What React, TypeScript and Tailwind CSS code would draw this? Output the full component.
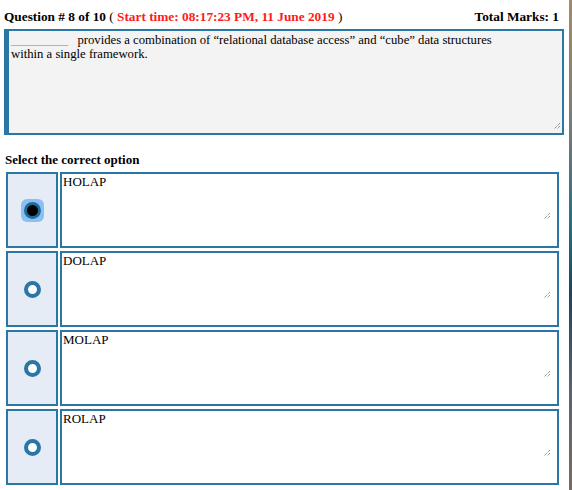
import React from 'react'

const options = ['HOLAP', 'DOLAP', 'MOLAP', 'ROLAP']

function Grip({ className }: { className: string }) {
  return (
    <svg className={className} width="8" height="8" viewBox="0 0 8 8">
      <path d="M7 1 L1 7 M7 4 L4 7" stroke="#6b6b6b" strokeWidth="1" strokeDasharray="1 1" />
    </svg>
  )
}

function Radio({ checked }: { checked: boolean }) {
  if (checked) {
    return (
      <div className="w-[23px] h-[23px] rounded-[6px] bg-[#8cc0f5] flex items-center justify-center">
        <div className="w-[17px] h-[17px] rounded-full bg-[#1f6c99] flex items-center justify-center">
          <div className="w-[11px] h-[11px] rounded-full bg-black" />
        </div>
      </div>
    )
  }
  return <div className="w-[17px] h-[17px] rounded-full border-4 border-[#2a76a5] bg-white" />
}

export default function App() {
  return (
    <div className="w-[572px] h-[490px] flex bg-white overflow-hidden text-black font-['Liberation_Serif',serif]">
      <div className="flex-1 flex flex-col">
        <div className="flex justify-between items-end h-[24px] pl-[4px] pr-[10px] text-[13.3px] font-bold leading-[15px]">
          <div>
            Question # 8 of 10 <span className="font-normal">(</span>{' '}
            <span className="text-[#ff1a1a]">Start time: 08:17:23 PM, 11 June 2019</span>{' '}
            <span className="font-normal">)</span>
          </div>
          <div>Total Marks: 1</div>
        </div>
        <div className="mt-[5px] ml-[4px] w-[560px] h-[106px] relative border-2 border-l-[5px] border-[#2a76a5] bg-[#f3f3f3] pl-[2px] pt-[2px] text-[12.7px] leading-[14px]">
          <span className="text-[#999]">_________</span>
          <span className="ml-[3px]">&nbsp; provides a combination of “relational database access” and “cube” data structures</span>
          <br />
          within a single framework.
          <Grip className="absolute right-[1px] bottom-[3px]" />
        </div>
        <div className="mt-[18px] ml-[5px] text-[13px] font-bold leading-[14px]">Select the correct option</div>
        <div className="mt-[5px] ml-[6px] flex flex-col gap-[3px]">
          {options.map((o, i) => (
            <div key={o} className="flex gap-[2px] h-[76px]">
              <div className="w-[52px] border-2 border-[#2a76a5] bg-[#e5ecf6] flex items-center justify-center">
                <Radio checked={i === 0} />
              </div>
              <div className="w-[499px] relative border-2 border-[#2a76a5] bg-white pl-[1px] pt-[1px] text-[13px] leading-[14px]">
                {o}
                <Grip className="absolute right-[6px] top-[38px]" />
              </div>
            </div>
          ))}
        </div>
      </div>
      <div className="w-[3px] bg-[linear-gradient(to_bottom,#a58a6a_0%,#7a7c78_25%,#2d6c88_45%,#1d4560_60%,#5a6470_80%,#7a6a60_100%)]" />
    </div>
  )
}
